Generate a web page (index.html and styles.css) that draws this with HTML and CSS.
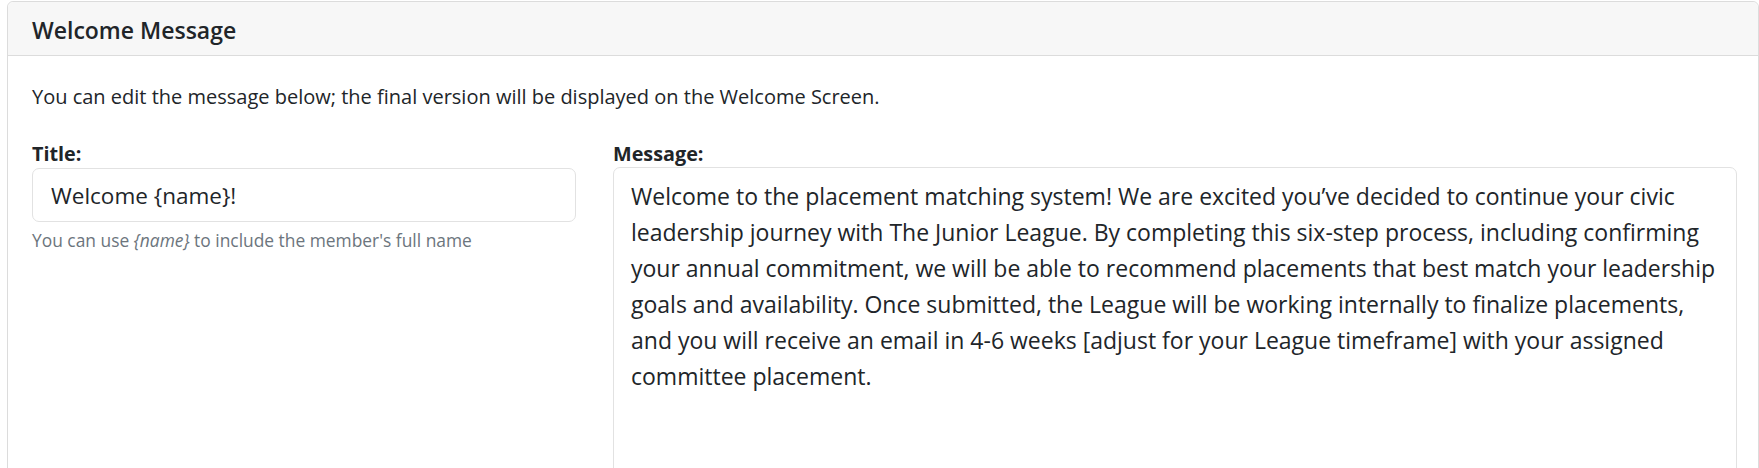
FILE: index.html
```html
<!DOCTYPE html>
<html lang="en">
<head>
<meta charset="utf-8">
<title>Welcome Message</title>
<link rel="stylesheet" href="styles.css">
</head>
<body>
<div class="card">
  <div class="card-header">Welcome Message</div>
  <div class="card-body">
    <p class="intro">You can edit the message below; the final version will be displayed on the Welcome Screen.</p>
    <div class="row">
      <div class="col">
        <label class="label" for="title">Title:</label>
        <input class="input" id="title" type="text" value="Welcome {name}!">
        <div class="help">You can use <em>{name}</em> to include the member's full name</div>
      </div>
      <div class="col">
        <label class="label" for="msg">Message:</label>
        <textarea class="textarea" id="msg">Welcome to the placement matching system! We are excited you’ve decided to continue your civic leadership journey with The Junior League. By completing this six-step process, including confirming your annual commitment, we will be able to recommend placements that best match your leadership goals and availability. Once submitted, the League will be working internally to finalize placements, and you will receive an email in 4-6 weeks [adjust for your League timeframe] with your assigned committee placement.</textarea>
      </div>
    </div>
  </div>
</div>
</body>
</html>
```

FILE: styles.css
```css
html, body {
  margin: 0;
  padding: 0;
  background: #ffffff;
}
body {
  font-family: "Open Sans", "Noto Sans", sans-serif;
  color: #212529;
  overflow: hidden;
}
.card {
  margin: 1px 0 0 7px;
  border: 1px solid #dcdcdc;
  border-radius: 6px;
  height: 600px;
  box-sizing: border-box;
}
.card-header {
  background: #f7f7f7;
  border-bottom: 1px solid #dcdcdc;
  border-radius: 6px 6px 0 0;
  height: 54px;
  box-sizing: border-box;
  padding: 3px 24px 0 24px;
  display: flex;
  align-items: center;
  font-size: 23px;
  font-weight: 600;
}
.card-body {
  padding: 27px 21px 0 24px;
}
.intro {
  margin: 0 0 29px 0;
  font-size: 20px;
  line-height: 28px;
}
.row {
  display: grid;
  grid-template-columns: 544px 1fr;
  column-gap: 37px;
}
.col {
  display: flex;
  flex-direction: column;
}
.label {
  font-size: 19.8px;
  font-weight: 700;
  line-height: 27px;
}
.input {
  font-family: inherit;
  color: #212529;
  font-size: 22.5px;
  line-height: 30px;
  height: 54px;
  box-sizing: border-box;
  padding: 11px 18px;
  border: 1px solid #e2e2e2;
  border-radius: 7px;
  outline: none;
  margin-top: 1px;
}
.help {
  margin-top: 6px;
  font-size: 17.4px;
  line-height: 24px;
  color: #6c757d;
}
.textarea {
  font-family: inherit;
  color: #212529;
  font-size: 23px;
  line-height: 36px;
  height: 340px;
  box-sizing: border-box;
  padding: 10px 17px;
  border: 1px solid #e2e2e2;
  border-radius: 7px;
  outline: none;
  resize: vertical;
}
```
